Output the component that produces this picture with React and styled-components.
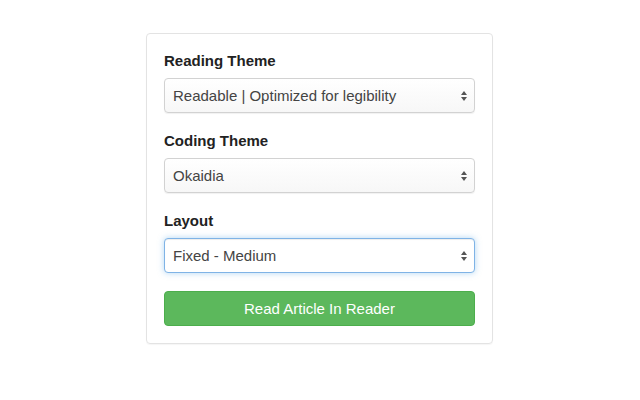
import React from 'react';
import styled, { createGlobalStyle } from 'styled-components';

const GlobalStyle = createGlobalStyle`
  body {
    margin: 0;
    background: #fff;
    font-family: "Liberation Sans", Arial, sans-serif;
  }
`;

const Page = styled.div`
  width: 640px;
  height: 400px;
  display: flex;
  align-items: flex-start;
  padding: 33px 0 0 146px;
  box-sizing: border-box;
`;

const Panel = styled.div`
  width: 347px;
  box-sizing: border-box;
  border: 1px solid #e3e3e3;
  border-radius: 4px;
  padding: 17px;
  display: flex;
  flex-direction: column;
  gap: 18px;
  box-shadow: 0 1px 1px rgba(0, 0, 0, 0.04);
`;

const Group = styled.div`
  display: flex;
  flex-direction: column;
`;

const Label = styled.label`
  font-size: 15px;
  line-height: 20px;
  font-weight: bold;
  color: #222;
  margin-bottom: 7px;
`;

const SelectBox = styled.div`
  position: relative;
  height: 35px;
  box-sizing: border-box;
  border: 1px solid ${(p) => (p.focused ? '#7fb3e6' : '#d2d2d2')};
  border-radius: 4px;
  background: ${(p) => (p.focused ? '#fff' : 'linear-gradient(#ffffff, #f7f7f7)')};
  box-shadow: ${(p) =>
    p.focused
      ? 'inset 0 1px 1px rgba(0,0,0,.075), 0 0 6px rgba(102,175,233,.5)'
      : '0 1px 1px rgba(0,0,0,0.06)'};
  display: flex;
  align-items: center;
  padding-left: 8px;
  font-size: 15px;
  color: #444;
`;

const Arrows = styled.svg`
  position: absolute;
  right: 6px;
  top: 50%;
  transform: translateY(-50%);
`;

const Button = styled.button`
  height: 35px;
  border: 1px solid #4cae4c;
  border-radius: 4px;
  background: #5cb85c;
  color: #fff;
  font-family: "Liberation Sans", Arial, sans-serif;
  font-size: 15px;
  cursor: pointer;
`;

const Select = ({ value, focused }) => (
  <SelectBox focused={focused}>
    {value}
    <Arrows width="8" height="12" viewBox="0 0 8 12">
      <path d="M4 1 L7 5 L1 5 Z" fill="#555" />
      <path d="M4 11 L7 7 L1 7 Z" fill="#555" />
    </Arrows>
  </SelectBox>
);

const App = () => (
  <>
    <GlobalStyle />
    <Page>
      <Panel>
        <Group>
          <Label>Reading Theme</Label>
          <Select value="Readable | Optimized for legibility" />
        </Group>
        <Group>
          <Label>Coding Theme</Label>
          <Select value="Okaidia" />
        </Group>
        <Group>
          <Label>Layout</Label>
          <Select value="Fixed - Medium" focused />
        </Group>
        <Button>Read Article In Reader</Button>
      </Panel>
    </Page>
  </>
);

export default App;
